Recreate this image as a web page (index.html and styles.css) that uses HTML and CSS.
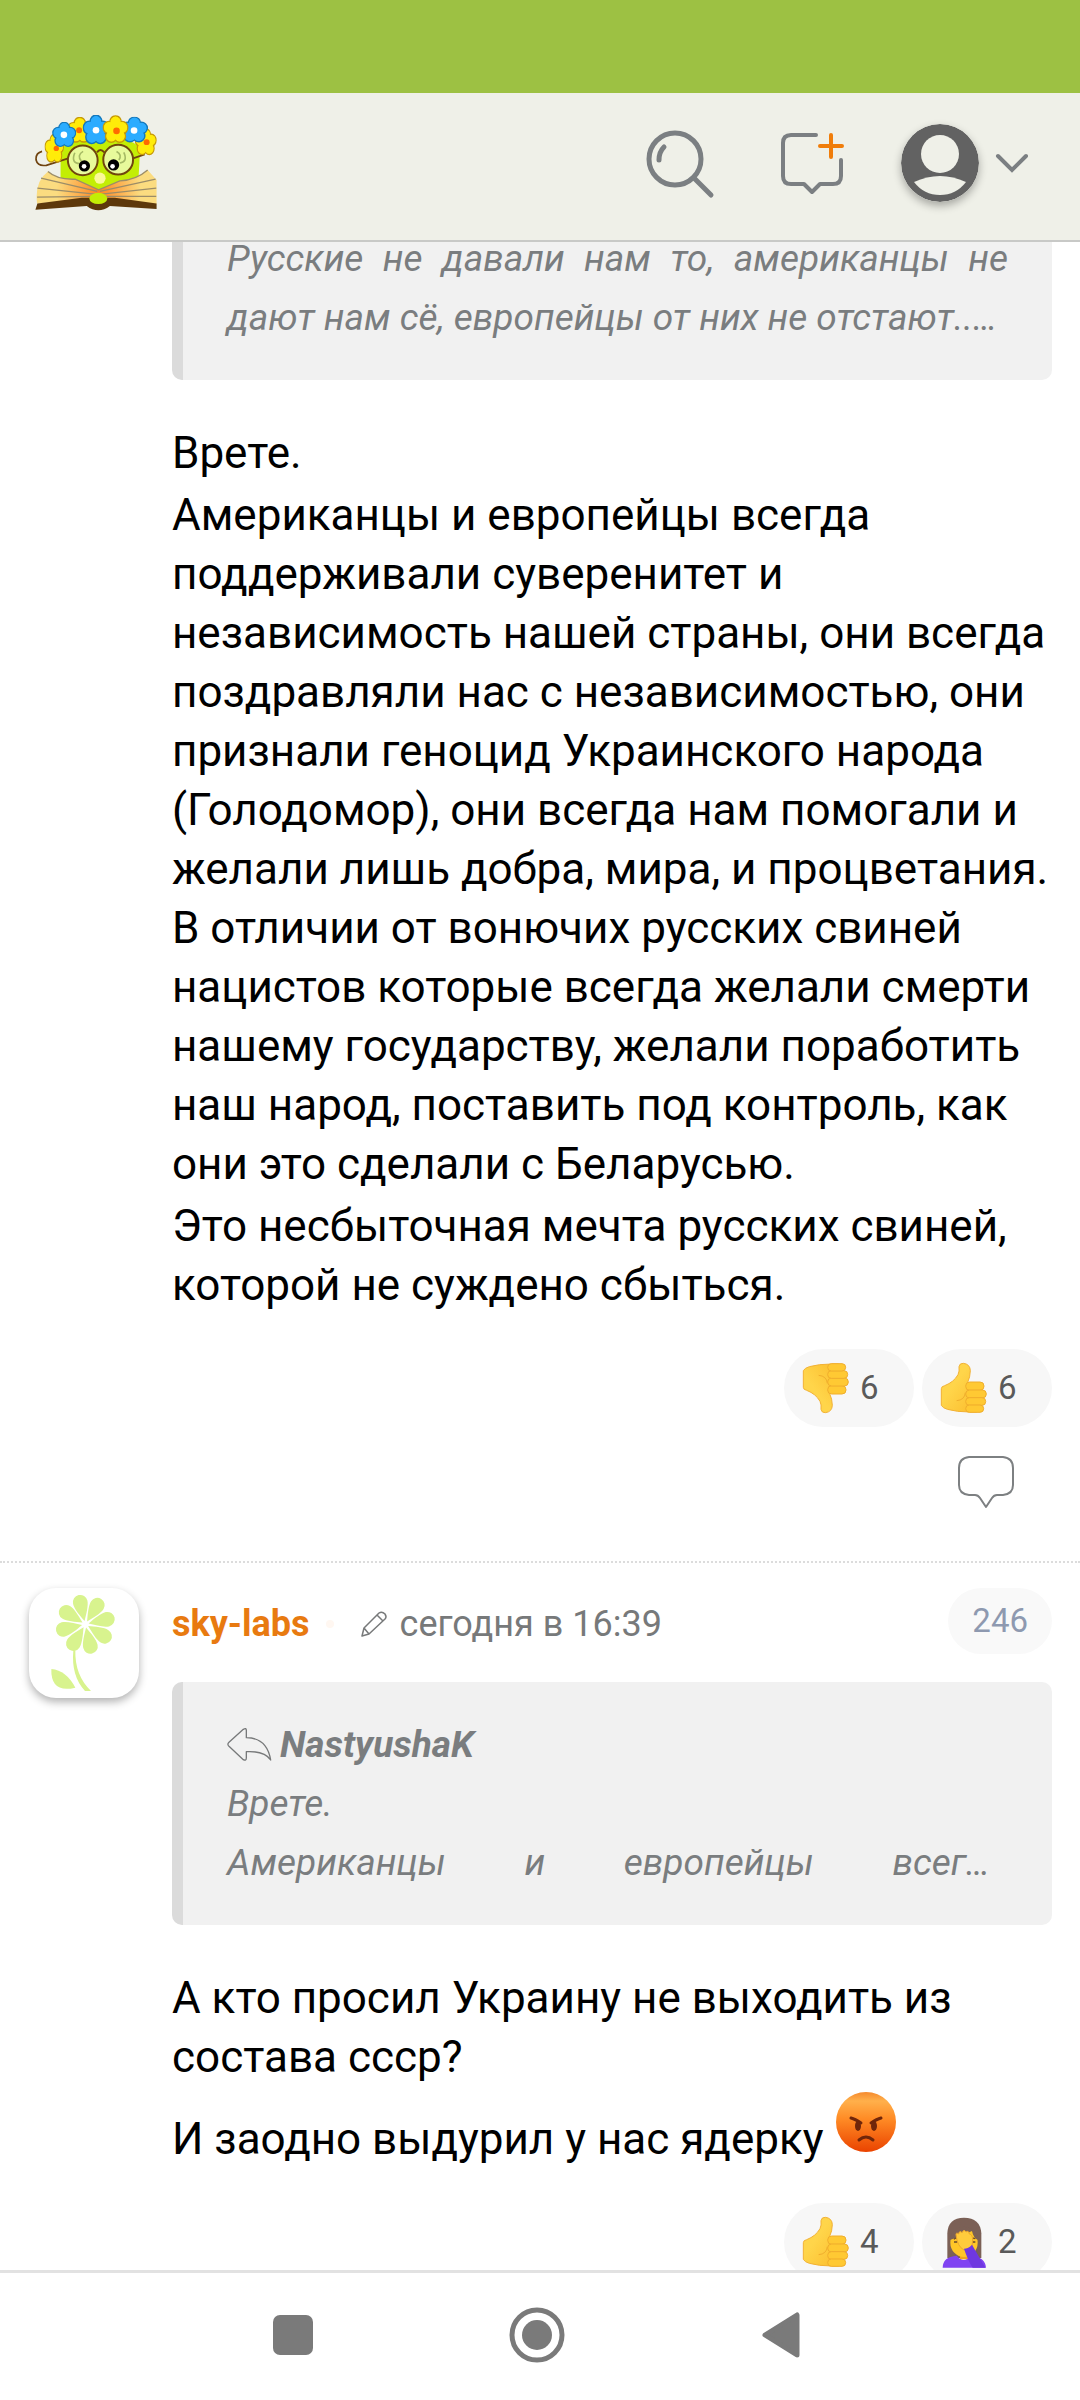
FILE: index.html
```html
<!DOCTYPE html>
<html lang="ru">
<head>
<meta charset="utf-8">
<meta name="viewport" content="width=device-width, initial-scale=1">
<title>Форум</title>
<link rel="stylesheet" href="styles.css">
</head>
<body>
<svg class="defs" aria-hidden="true">
  <defs>
    <linearGradient id="skin" x1="0" y1="0" x2="1" y2="1">
      <stop offset="0.4" stop-color="#ffd54a"/><stop offset="1" stop-color="#fbbc2c"/>
    </linearGradient>
    <symbol id="thumb" viewBox="0 0 144 156">
      <path d="M4 80Q4 73 14 71Q42 60 54 38Q59 28 57 14Q59 3 70 4Q90 6 91 26Q91 44 82 64L110 64V150H90Q50 150 22 142Q8 138 4 130Z" fill="url(#skin)" stroke="#f2b134" stroke-width="3"/>
      <g fill="#ffc933" stroke="#f0ae2d" stroke-width="3">
        <rect x="77" y="60" width="55" height="25" rx="12"/>
        <rect x="77" y="84" width="62" height="24" rx="12"/>
        <rect x="77" y="107" width="60" height="23" rx="11"/>
        <rect x="77" y="129" width="54" height="22" rx="11"/>
      </g>
      <path d="M76 92Q74 114 50 116" fill="none" stroke="#f0ae2d" stroke-width="3"/>
    </symbol>
    <symbol id="flower" viewBox="-28 -28 56 56" preserveAspectRatio="none">
      <g stroke-width="3">
        <circle cx="0" cy="-15" r="12"/><circle cx="14" cy="-4" r="12"/><circle cx="9" cy="13" r="12"/>
        <circle cx="-9" cy="13" r="12"/><circle cx="-14" cy="-4" r="12"/>
      </g>
      <g stroke="none">
        <circle cx="0" cy="-14" r="11"/><circle cx="13" cy="-4" r="11"/><circle cx="8" cy="12" r="11"/>
        <circle cx="-8" cy="12" r="11"/><circle cx="-13" cy="-4" r="11"/><circle r="10"/>
      </g>
    </symbol>
    <path id="petal" d="M0 -10C-10 -30 -22 -52 -22 -68A22 22 0 0 1 22 -68C22 -52 10 -30 0 -10Z"/>
  </defs>
</svg>

<div class="statusbar"></div>

<header class="header">
  <a class="logo" href="#" aria-label="Главная">
    <svg width="122" height="96" viewBox="104 99 368 290">
      <defs>
        <radialGradient id="page" gradientUnits="userSpaceOnUse" cx="296" cy="325" r="170">
          <stop offset="0" stop-color="#ff8420"/><stop offset="0.75" stop-color="#fbdc80"/>
        </radialGradient>
      </defs>
      <path d="M181 300V200Q185 170 300 168Q412 168 421 205L416 300L300 345Z" fill="#c3ee05"/>
      <path d="M125 209Q105 214 107 235Q112 255 138 251L204 230M400 230L435 218" fill="none" stroke="#6f430f" stroke-width="5"/>
      <path d="M110 366Q102 300 143 270Q170 295 225 293L296 325L360 298Q410 295 444 265L471 295V368L320 352H270Z" fill="url(#page)"/>
      <path d="M143 270Q170 295 225 293L296 325L360 298Q410 295 444 265M122 290L292 330M111 320L285 338M110 347L275 345M300 330L468 293M305 338L470 320M315 345H470" fill="none" stroke="#9c8d68" stroke-width="4"/>
      <path d="M105 385L111 366L245 349H345L471 366V383L330 374Q295 400 260 374Z" fill="#5d380b"/>
      <ellipse cx="295" cy="351" rx="27" ry="17" fill="#c3ee05"/>
      <circle cx="300" cy="290" r="17" fill="#fbf899"/>
      <circle cx="248" cy="236" r="45" fill="#e8fa9b" stroke="#70460e" stroke-width="6"/>
      <circle cx="355" cy="234" r="45" fill="#e8fa9b" stroke="#70460e" stroke-width="6"/>
      <path d="M291 212Q301 198 313 212" fill="none" stroke="#70460e" stroke-width="6"/>
      <path d="M224 213Q211 244 239 246M249 209Q229 221 244 239M372 212Q385 240 360 244M350 209Q368 219 357 235" fill="none" stroke="#a6ba65" stroke-width="5"/>
      <circle cx="253" cy="253" r="17"/><circle cx="341" cy="250" r="17"/>
      <circle cx="252" cy="254" r="7" fill="#fff"/><circle cx="338" cy="254" r="7" fill="#fff"/>
      <g fill="#ffec09" stroke="#c79a06">
        <use href="#flower" x="132" y="156" width="60" height="90"/>
        <use href="#flower" x="200" y="105" width="78" height="80"/>
        <use href="#flower" x="404" y="139" width="68" height="84"/>
      </g>
      <g fill="#2bacff" stroke="#1479bd">
        <use href="#flower" x="155" y="120" width="74" height="78"/>
        <use href="#flower" x="362" y="104" width="84" height="80"/>
        <use href="#flower" x="247" y="98" width="82" height="92"/>
      </g>
      <use href="#flower" x="307" y="100" width="80" height="86" fill="#ffec09" stroke="#c79a06"/>
      <g fill="#ff6a00"><circle cx="237" cy="145" r="9"/><circle cx="350" cy="147" r="10"/><circle cx="441" cy="181" r="9"/><circle cx="168" cy="200" r="8"/></g>
      <g fill="#fff"><circle cx="191" cy="159" r="10"/><circle cx="288" cy="145" r="10"/><circle cx="403" cy="146" r="10"/></g>
    </svg>
  </a>
  <nav class="tools">
    <button class="tool" aria-label="Поиск">
      <svg width="76" height="72" viewBox="0 0 76 72" fill="none" stroke="#7b7f82" stroke-linecap="round">
        <circle cx="30" cy="32" r="26" stroke-width="5"/>
        <path d="M49 51L66 68" stroke-width="5"/>
        <path d="M14 33Q14 25 19 20" stroke-width="5"/>
      </svg>
    </button>
    <button class="tool" aria-label="Новая тема">
      <svg width="68" height="66" viewBox="0 0 68 66" fill="none" stroke="#7b7f82" stroke-width="4" stroke-linecap="round" stroke-linejoin="round">
        <path d="M39 5H14Q6 5 6 13V46Q6 54 14 54H27L35 62L43 54H56Q64 54 64 46V30"/>
        <path d="M54 5V27M43 16H65" stroke="#f07d0a"/>
      </svg>
    </button>
    <button class="tool account" aria-label="Профиль">
      <svg class="user" width="78" height="78" viewBox="0 0 78 78">
        <circle cx="39" cy="39" r="39" fill="#626262"/>
        <circle cx="39" cy="30" r="19" fill="#eff0e8"/>
        <path d="M13 58Q39 46 65 58Q55 71 39 71T13 58Z" fill="#eff0e8"/>
      </svg>
      <svg width="34" height="20" viewBox="0 0 34 20" fill="none" stroke="#7b7f82" stroke-width="4" stroke-linecap="round"><path d="M3 3L17 17L31 3"/></svg>
    </button>
  </nav>
</header>

<main class="thread">
  <article class="post scrolled">
    <div class="content">
      <blockquote class="quote">
        <p>Русские не давали нам то, американцы не дают нам сё, европейцы от них не отстают..…</p>
      </blockquote>
      <div class="text">
        <p>Врете.</p>
        <p>Американцы и европейцы всегда поддерживали суверенитет и независимость нашей страны, они всегда поздравляли нас с независимостью, они признали геноцид Украинского народа (Голодомор), они всегда нам помогали и желали лишь добра, мира, и процветания. В отличии от вонючих русских свиней нацистов которые всегда желали смерти нашему государству, желали поработить наш народ, поставить под контроль, как они это сделали с Беларусью.</p>
        <p>Это несбыточная мечта русских свиней, которой не суждено сбыться.</p>
      </div>
      <div class="reactions">
        <button class="reaction" aria-label="Не нравится: 6">
          <svg width="48" height="52" viewBox="0 0 144 156"><g transform="translate(0 156) scale(1 -1)"><use href="#thumb" width="144" height="156"/></g></svg>
          <span>6</span>
        </button>
        <button class="reaction" aria-label="Нравится: 6">
          <svg width="48" height="52"><use href="#thumb"/></svg>
          <span>6</span>
        </button>
      </div>
      <div class="actions">
        <button class="answer" aria-label="Ответить">
          <svg width="58" height="54" viewBox="0 0 58 54" fill="none" stroke="#7d8082" stroke-width="2" stroke-linejoin="round"><path d="M12 2H46Q56 3 56 13V30Q56 39 46 40H40Q37 40 35 43L29 52L23 43Q21 40 18 40H12Q2 39 2 30V13Q2 3 12 2Z"/></svg>
        </button>
      </div>
    </div>
  </article>

  <article class="post">
    <a class="avatar" href="#" aria-label="sky-labs">
      <svg width="110" height="110" viewBox="0 0 330 330" fill="#d8f38e">
        <g transform="translate(169 109) rotate(-13)">
          <use href="#petal"/><use href="#petal" transform="rotate(45)"/><use href="#petal" transform="rotate(90)"/><use href="#petal" transform="rotate(135)"/>
          <use href="#petal" transform="rotate(180)"/><use href="#petal" transform="rotate(225)"/><use href="#petal" transform="rotate(270)"/><use href="#petal" transform="rotate(315)"/>
        </g>
        <path d="M133 187H139Q137 262 186 309H168Q126 265 133 187Z"/>
        <path d="M67 243Q112 247 139 299Q65 317 67 243Z"/>
      </svg>
    </a>
    <div class="content">
      <div class="meta">
        <a class="author" href="#">sky-labs</a>
        <span class="presence"></span>
        <svg width="28" height="28" viewBox="0 0 28 28" fill="none" stroke="#77797a" stroke-width="1.5" stroke-linejoin="round"><path d="M2 26L4 18L19 3Q22 1 25 4Q27 7 25 9L9 24ZM4 18L9 24M17 5L23 11"/></svg>
        <time>сегодня в 16:39</time>
        <a class="number" href="#">246</a>
      </div>
      <blockquote class="quote">
        <a class="cited" href="#">
          <svg width="46" height="36" viewBox="0 0 138 108" fill="none" stroke="#77797a" stroke-width="4" stroke-linejoin="round"><path d="M3 52Q2 50 6 46L49 7Q58 2 58 10V32Q120 32 131 99Q113 71 58 74V92Q58 103 49 98L6 58Q2 54 3 52Z"/></svg>
          <strong>NastyushaK</strong>
        </a>
        <p>Врете.</p>
        <p class="cut">Американцы и европейцы всег…</p>
      </blockquote>
      <div class="text">
        <p>А кто просил Украину не выходить из состава ссср?</p>
        <p>И заодно выдурил у нас ядерку <svg class="smile" role="img" aria-label="злость" width="64" height="64" viewBox="1 1 64 64">
          <defs><linearGradient id="rage" x1="0" y1="0" x2="0" y2="1"><stop offset="0" stop-color="#f58a2e"/><stop offset="0.15" stop-color="#ffb04b"/><stop offset="0.45" stop-color="#ff8b25"/><stop offset="1" stop-color="#ea4300"/></linearGradient></defs>
          <circle cx="33" cy="33" r="30" fill="url(#rage)"/>
          <g fill="none" stroke="#70260a" stroke-width="3" stroke-linecap="round"><path d="M18 29Q22 30 28 34M48 29Q44 30 38 34M26 51Q33 45 40 51"/></g>
          <ellipse cx="25" cy="37" rx="3" ry="5" fill="#70260a"/><ellipse cx="41" cy="37" rx="3" ry="5" fill="#70260a"/>
        </svg></p>
      </div>
      <div class="reactions">
        <button class="reaction" aria-label="Нравится: 4">
          <svg width="48" height="52"><use href="#thumb"/></svg>
          <span>4</span>
        </button>
        <button class="reaction" aria-label="Рука-лицо: 2">
          <svg width="48" height="52" viewBox="0 0 144 156">
            <path d="M22 126V52Q24 5 72 5Q121 5 124 52V126Z" fill="#7b6056"/>
            <path d="M60 100H88V130H60Z" fill="#f0a51c"/>
            <ellipse cx="72" cy="80" rx="41" ry="43" fill="#ffc627"/>
            <path d="M30 72Q32 38 72 32Q112 38 114 72Q100 66 96 45Q60 62 30 72Z" fill="#7b6056"/>
            <path d="M8 155Q8 122 50 119Q72 145 92 119Q136 122 138 155Z" fill="#8043f2"/>
            <path d="M42 70Q46 64 54 68M42 78H52M94 70Q98 64 106 68M96 78H106" fill="none" stroke="#6a4a2b" stroke-width="4"/>
            <path d="M48 56Q48 48 56 54Q58 42 66 50Q72 38 78 48Q86 42 88 54Q98 56 98 72L96 92L72 102Q52 92 48 56Z" fill="#ffcb3c" stroke="#eda62b" stroke-width="3"/>
            <path d="M72 98Q86 98 96 86L136 155H98Q84 134 72 98Z" fill="#6f38e0"/>
          </svg>
          <span>2</span>
        </button>
      </div>
    </div>
  </article>
</main>

<nav class="system">
  <button aria-label="Недавние"><svg width="40" height="40"><rect width="40" height="40" rx="7" fill="#7a7a7a"/></svg></button>
  <button aria-label="Домой"><svg width="56" height="56" viewBox="0 0 56 56"><circle cx="28" cy="28" r="25" fill="none" stroke="#7a7a7a" stroke-width="5"/><circle cx="28" cy="28" r="15" fill="#7a7a7a"/></svg></button>
  <button aria-label="Назад"><svg width="38" height="48" viewBox="0 0 38 48"><path d="M3 24L35 4V44Z" fill="#7a7a7a" stroke="#7a7a7a" stroke-width="5" stroke-linejoin="round"/></svg></button>
</nav>
</body>
</html>
```
FILE: styles.css
```css
* {
  box-sizing: border-box;
}

body {
  margin: 0;
  height: 100vh;
  display: flex;
  flex-direction: column;
  background: #fff;
  color: #000;
  font-family: Roboto, "Noto Sans", sans-serif;
  font-size: 36px;
  line-height: 59px;
}

p,
blockquote {
  margin: 0;
}

a {
  color: inherit;
  text-decoration: none;
}

svg {
  display: block;
  flex: none;
}

button {
  padding: 0;
  border: 0;
  background: none;
  font: inherit;
  color: inherit;
}

.defs {
  position: absolute;
  width: 0;
  height: 0;
}

.statusbar {
  flex: none;
  height: 93px;
  background: #9dc143;
}

.header {
  flex: none;
  position: relative;
  z-index: 1;
  height: 149px;
  padding: 0 51px 8px 35px;
  display: flex;
  align-items: center;
  justify-content: space-between;
  background: #eff0e8;
  border-bottom: 2px solid #c8c9c7;
}

.tools {
  display: flex;
  align-items: center;
  gap: 56px;
}

.account {
  display: flex;
  align-items: center;
  gap: 16px;
}

.user {
  border-radius: 50%;
  box-shadow: 0 4px 8px rgba(0, 0, 0, 0.3);
}

.thread {
  flex: 1;
  min-height: 0;
  overflow: hidden;
}

.post {
  display: flex;
  gap: 33px;
  padding: 25px 28px 52px 29px;
}

.post + .post {
  border-top: 2px dotted #dcdcdc;
}

.scrolled {
  margin-top: -46px;
  padding-top: 0;
  padding-left: 172px;
}

.content {
  flex: 1;
  min-width: 0;
}

.avatar {
  flex: none;
  align-self: flex-start;
  border-radius: 27px;
  box-shadow: 0 4px 8px rgba(0, 0, 0, 0.3);
}

.meta {
  display: flex;
  align-items: center;
  height: 72px;
  margin-bottom: 22px;
  line-height: 72px;
  color: #77797a;
}

.author {
  color: #e87a10;
  font-weight: 700;
}

.presence {
  width: 8px;
  height: 8px;
  margin: 0 26px 0 16px;
  border-radius: 50%;
  background: #fff7f1;
}

.meta time {
  margin-left: 12px;
}

.number {
  align-self: flex-start;
  margin-left: auto;
  padding: 0 24px;
  border-radius: 33px;
  background: #f9f9f9;
  color: #8e99b0;
  font-size: 33px;
  line-height: 66px;
}

.quote {
  padding: 33px 44px;
  border-left: 11px solid #dbdbdb;
  border-radius: 10px;
  background: #f1f1f1;
  color: #7a7d7f;
  font-size: 37px;
  font-style: italic;
  text-align: justify;
}

.cited {
  display: flex;
  align-items: center;
  gap: 7px;
}

.cited strong {
  font-weight: 700;
}

.cut {
  padding-right: 18px;
  text-align-last: justify;
}

.text {
  padding: 44px 0 34px;
  font-size: 44px;
}

.text p + p {
  margin-top: 3px;
}

.smile {
  display: inline-block;
  vertical-align: baseline;
}

.reactions {
  display: flex;
  justify-content: flex-end;
  gap: 8px;
}

.reaction {
  display: flex;
  align-items: center;
  gap: 10px;
  width: 130px;
  height: 78px;
  padding: 0 0 0 18px;
  border-radius: 39px;
  background: #f7f7f7;
  color: #5a5a5a;
  font-size: 33px;
  line-height: 39px;
}

.reaction span {
  padding-bottom: 2px;
}

.actions {
  display: flex;
  justify-content: flex-end;
  padding: 28px 37px 0 0;
}

.system {
  flex: none;
  height: 130px;
  padding: 0 6px 4px 0;
  display: flex;
  align-items: center;
  justify-content: center;
  gap: 164px;
  background: #fff;
  border-top: 3px solid #e2e2e2;
}

.system button {
  width: 80px;
  display: flex;
  justify-content: center;
}
```
